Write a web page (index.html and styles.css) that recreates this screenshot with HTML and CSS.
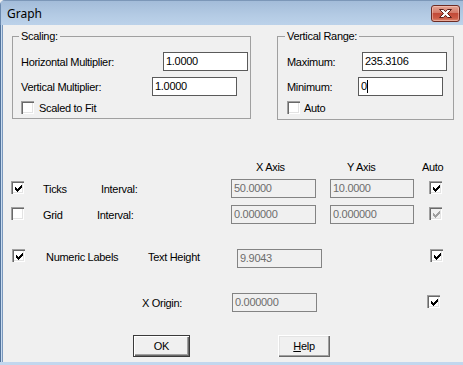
FILE: index.html
```html
<!DOCTYPE html>
<html>
<head>
<meta charset="utf-8">
<title>Graph</title>
<link rel="stylesheet" href="styles.css">
</head>
<body>
<div class="window">
  <div class="titlebar">
    <span class="title">Graph</span>
    <span class="close">
      <svg width="17" height="11" viewBox="0 0 17 11"><path d="M2.5 1.5h4l2 2.2 2-2.2h4l-4 4 4 4h-4l-2-2.2-2 2.2h-4l4-4z" fill="#fff" stroke="#5b1f18" stroke-width="1"/></svg>
    </span>
  </div>
  <div class="client">
    <div class="groups">
      <fieldset class="group scaling">
        <legend>Scaling:</legend>
        <div class="frow first"><span class="lbl w142">Horizontal Multiplier:</span><span class="edit">1.0000</span></div>
        <div class="frow second"><span class="lbl w131">Vertical Multiplier:</span><span class="edit">1.0000</span></div>
        <div class="frow third"><span class="cb"></span><span class="cblbl">Scaled to Fit</span></div>
      </fieldset>
      <fieldset class="group vrange">
        <legend>Vertical Range:</legend>
        <div class="frow first"><span class="lbl w75">Maximum:</span><span class="edit">235.3106</span></div>
        <div class="frow second"><span class="lbl w71">Minimum:</span><span class="edit">0<span class="caret"></span></span></div>
        <div class="frow third"><span class="cb"></span><span class="cblbl auto">Auto</span></div>
      </fieldset>
    </div>

    <div class="row head">
      <span class="h-x">X Axis</span>
      <span class="h-y">Y Axis</span>
      <span class="h-auto">Auto</span>
    </div>

    <div class="row ticks">
      <span class="cb checked lead"><svg width="7" height="7" viewBox="0 0 7 7"><path d="M0 2h1v3H0zM1 3h1v3H1zM2 4h1v3H2zM3 3h1v3H3zM4 2h1v3H4zM5 1h1v3H5zM6 0h1v3H6z"/></svg></span>
      <span class="lbl t-name">Ticks</span>
      <span class="lbl t-int">Interval:</span>
      <span class="edit dis ix">50.0000</span>
      <span class="edit dis iy">10.0000</span>
      <span class="cb checked cauto"><svg width="7" height="7" viewBox="0 0 7 7"><path d="M0 2h1v3H0zM1 3h1v3H1zM2 4h1v3H2zM3 3h1v3H3zM4 2h1v3H4zM5 1h1v3H5zM6 0h1v3H6z"/></svg></span>
    </div>

    <div class="row grid">
      <span class="cb lead"></span>
      <span class="lbl g-name">Grid</span>
      <span class="lbl g-int">Interval:</span>
      <span class="edit dis ix">0.000000</span>
      <span class="edit dis iy">0.000000</span>
      <span class="cb checked disabled cauto"><svg width="7" height="7" viewBox="0 0 7 7"><path d="M0 2h1v3H0zM1 3h1v3H1zM2 4h1v3H2zM3 3h1v3H3zM4 2h1v3H4zM5 1h1v3H5zM6 0h1v3H6z"/></svg></span>
    </div>

    <div class="row numeric">
      <span class="cb checked n-cb"><svg width="7" height="7" viewBox="0 0 7 7"><path d="M0 2h1v3H0zM1 3h1v3H1zM2 4h1v3H2zM3 3h1v3H3zM4 2h1v3H4zM5 1h1v3H5zM6 0h1v3H6z"/></svg></span>
      <span class="lbl n-name">Numeric Labels</span>
      <span class="lbl n-th">Text Height</span>
      <span class="edit dis in">9.9043</span>
      <span class="cb checked n-auto"><svg width="7" height="7" viewBox="0 0 7 7"><path d="M0 2h1v3H0zM1 3h1v3H1zM2 4h1v3H2zM3 3h1v3H3zM4 2h1v3H4zM5 1h1v3H5zM6 0h1v3H6z"/></svg></span>
    </div>

    <div class="row origin">
      <span class="lbl o-name">X Origin:</span>
      <span class="edit dis io">0.000000</span>
      <span class="cb checked o-auto"><svg width="7" height="7" viewBox="0 0 7 7"><path d="M0 2h1v3H0zM1 3h1v3H1zM2 4h1v3H2zM3 3h1v3H3zM4 2h1v3H4zM5 1h1v3H5zM6 0h1v3H6z"/></svg></span>
    </div>

    <div class="row buttons">
      <span class="btn default">OK</span>
      <span class="btn help"><u>H</u>elp</span>
    </div>
  </div>
</div>
</body>
</html>
```

FILE: styles.css
```css
html, body {
  margin: 0;
  padding: 0;
  background: #f0f0f0;
}

.window {
  width: 463px;
  height: 365px;
  box-sizing: border-box;
  display: flex;
  flex-direction: column;
  background: #c2d7ee;
  border-top-left-radius: 5px;
  overflow: hidden;
  font-family: "Liberation Sans", Arial, sans-serif;
  font-size: 11px;
  letter-spacing: -0.3px;
  color: #000;
}

.titlebar {
  height: 25px;
  flex: none;
  display: flex;
  align-items: flex-start;
  justify-content: space-between;
  background: linear-gradient(#a3bcd9, #b4cbe4 60%, #bcd2ea);
  border-top: 1px solid #7c97b8;
  border-left: 1px solid #6d8bb0;
  box-sizing: border-box;
}

.title {
  font-family: "Noto Sans", "DejaVu Sans", sans-serif;
  font-size: 12px;
  letter-spacing: 0;
  line-height: 16px;
  margin: 5px 0 0 6px;
  color: #000;
}

.close {
  width: 27px;
  height: 15px;
  margin: 4px 3px 0 0;
  border: 1px solid #6d2b23;
  border-radius: 3px;
  background: linear-gradient(#e4a595, #d47a69 45%, #c24a38 50%, #cc5a45 80%, #dc8a72);
  display: flex;
  align-items: center;
  justify-content: center;
  box-shadow: inset 0 0 0 1px rgba(255, 220, 210, 0.45);
}

.client {
  flex: 1;
  margin: 0 0 3px 3px;
  background: #f0f0f0;
  box-shadow: -1px 0 0 #7a98bd, -2px 0 0 #c8dbef, -3px 0 0 #52739c;
  padding-top: 5px;
  display: flex;
  flex-direction: column;
}

.groups {
  display: flex;
  align-items: flex-start;
}

.group {
  margin: 0;
  padding: 0;
  border: 1px solid #a0a0a0;
  box-sizing: border-box;
  min-width: 0;
}

.group legend {
  padding: 0 2px;
  margin-left: -2px;
  line-height: 12px;
}

.scaling {
  margin-left: 9px;
  width: 239px;
  height: 89px;
  padding-left: 8px;
}

.vrange {
  margin-left: 26px;
  width: 177px;
  height: 90px;
  padding-left: 9px;
}

.frow {
  display: flex;
  align-items: center;
}

.frow.first { margin-top: 10px; }
.frow.second { margin-top: 6px; }
.frow.third { margin-top: 5px; }

.lbl {
  flex: none;
  white-space: nowrap;
}

.w142 { width: 142px; }
.w131 { width: 131px; }
.w75 { width: 75px; }
.w71 { width: 71px; }

.edit {
  flex: none;
  box-sizing: border-box;
  width: 85px;
  height: 19px;
  border: 1px solid #5a5a5a;
  background: #fff;
  padding-left: 2px;
  line-height: 17px;
  display: flex;
  align-items: center;
}

.edit.dis {
  background: #f0f0f0;
  border-color: #838383;
  color: #6d6d6d;
}

.caret {
  display: inline-block;
  width: 1px;
  height: 13px;
  background: #000;
}

.cb {
  flex: none;
  box-sizing: border-box;
  width: 13px;
  height: 13px;
  background: #fff;
  border: none;
  box-shadow: inset 1px 1px 0 #a0a0a0, inset 2px 2px 0 #696969, inset -1px -1px 0 #fff, inset -2px -2px 0 #e3e3e3;
  display: flex;
  align-items: center;
  justify-content: center;
  padding: 0;
}

.cb svg {
  display: block;
  fill: #000;
  margin: 1px 0 0 1px;
}

.cb.disabled {
  background: #f0f0f0;
}

.cb.disabled svg {
  fill: #a0a0a0;
}

.cblbl {
  margin-left: 5px;
  white-space: nowrap;
}

.cblbl.auto {
  margin-left: 4px;
}

.row {
  display: flex;
  align-items: center;
  flex: none;
}

.head {
  margin-top: 41px;
  height: 13px;
  line-height: 13px;
}

.h-x { margin-left: 253px; width: 91px; }
.h-y { width: 75px; }

.ticks {
  margin-top: 5px;
  height: 19px;
}

.grid {
  margin-top: 7px;
  height: 19px;
}

.lead { margin-left: 8px; margin-top: -2px; }
.t-name { margin-left: 19px; width: 58px; }
.t-int { width: 130px; }
.g-name { margin-left: 19px; width: 54px; }
.g-int { width: 134px; }
.ix { width: 85px; }
.iy { margin-left: 14px; width: 84px; }
.cauto { margin-left: 15px; margin-top: -2px; }

.numeric {
  margin-top: 25px;
  height: 19px;
}

.n-cb { margin-left: 9px; margin-top: -6px; }
.n-name { margin-left: 21px; width: 102px; margin-top: -3px; }
.n-th { width: 89px; margin-top: -3px; }
.in { width: 85px; }
.n-auto { margin-left: 108px; margin-top: -6px; }

.origin {
  margin-top: 25px;
  height: 19px;
}

.o-name { margin-left: 139px; width: 90px; }
.io { width: 85px; }
.o-auto { margin-left: 110px; margin-top: -2px; }

.buttons {
  margin-top: 23px;
  height: 22px;
}

.btn {
  box-sizing: border-box;
  height: 22px;
  display: flex;
  align-items: center;
  justify-content: center;
  background: #f0f0f0;
  line-height: 13px;
}

.btn.default {
  margin-left: 130px;
  width: 57px;
  border: 1px solid #3a3a3a;
  box-shadow: inset 1px 1px 0 #fff, inset -1px -1px 0 #696969, inset -2px -2px 0 #a0a0a0;
}

.btn.help {
  margin-left: 88px;
  width: 52px;
  box-shadow: inset 1px 1px 0 #fff, inset -1px -1px 0 #696969, inset -2px -2px 0 #a0a0a0, inset 2px 2px 0 #e3e3e3;
}

.btn u {
  text-decoration: underline;
  text-underline-offset: 1px;
}
```
